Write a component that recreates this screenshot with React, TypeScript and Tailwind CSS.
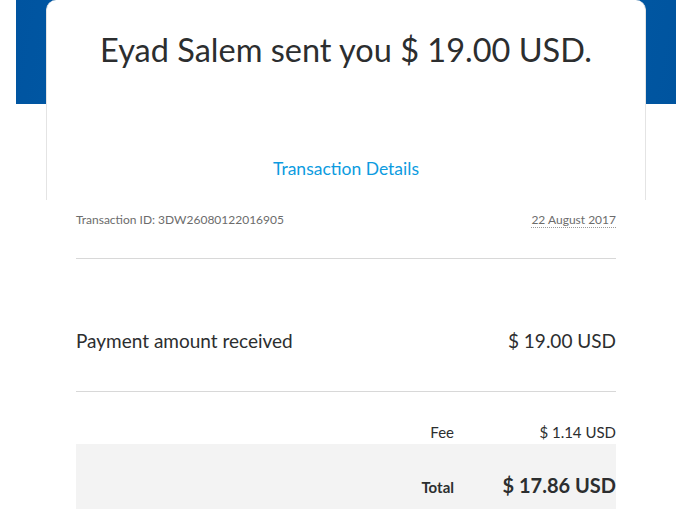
import React from "react";

export default function App() {
  const font = { fontFamily: "Lato, 'Open Sans', sans-serif" };
  return (
    <div className="w-[699px] h-[509px] overflow-hidden bg-white" style={font}>
      <div className="ml-[16px] w-[660px] bg-[linear-gradient(100deg,#0054a0,#0062ae_50%,#00549f)] bg-[length:100%_104px] bg-no-repeat">
        <div className="mx-[30px] h-[200px] bg-white rounded-t-[10px] border-x border-[#e4e4e4] flex flex-col items-center">
          <h1 className="mt-[30px] text-[32.5px] leading-[40px] text-[#2c2e2f]">
            Eyad Salem sent you $ 19.00 USD.
          </h1>
          <div className="mt-[88px] text-[17.5px] leading-[22px] text-[#0c9be0]">Transaction Details</div>
        </div>
        <div className="px-[60px]">
          <div className="flex justify-between items-baseline pt-[13px] text-[12px] leading-[14px] text-[#6c6c6c]">
            <span>Transaction ID: 3DW26080122016905</span>
            <span className="border-b border-dotted border-[#9a9a9a]">22 August 2017</span>
          </div>
          <div className="mt-[30px] h-px bg-[#d8d8d8]" />
          <div className="flex justify-between items-baseline mt-[70px] text-[19px] leading-[24px] text-[#2c2e2f]">
            <span>Payment amount received</span>
            <span>$ 19.00 USD</span>
          </div>
          <div className="mt-[38px] h-px bg-[#d8d8d8]" />
          <div className="flex justify-end items-baseline mt-[31px] text-[15px] leading-[18px] text-[#2c2e2f]">
            <span className="w-[120px] text-right">Fee</span>
            <span className="w-[162px] text-right">$ 1.14 USD</span>
          </div>
          <div className="mt-[3px] h-[70px] bg-[#f3f3f3] flex justify-end items-baseline pt-[26px] text-[#2c2e2f]">
            <span className="w-[120px] text-right text-[15px] font-bold">Total</span>
            <span className="w-[162px] text-right text-[20px] font-bold">$ 17.86 USD</span>
          </div>
        </div>
      </div>
    </div>
  );
}
